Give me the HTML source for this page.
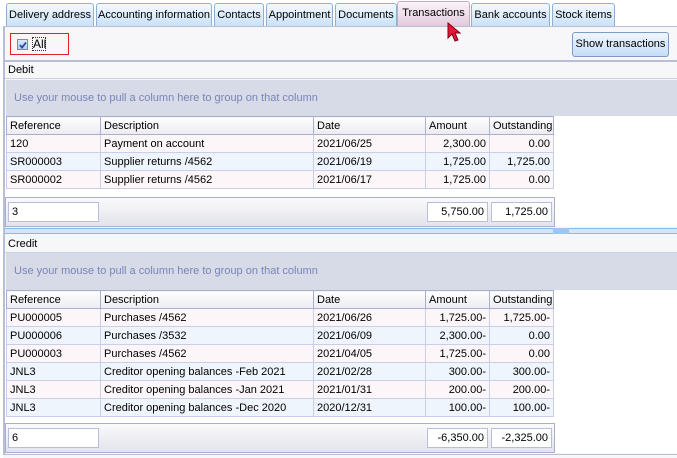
<!DOCTYPE html>
<html><head><meta charset="utf-8"><style>
*{box-sizing:border-box;margin:0;padding:0}
body{width:677px;height:458px;overflow:hidden;background:#fff;font-family:"Liberation Sans",sans-serif;font-size:11px;color:#000;position:relative}
.a{position:absolute}
.tab{position:absolute;top:3px;height:23px;border:1px solid #8fb0d4;border-bottom:none;border-radius:3px 3px 0 0;background:linear-gradient(#f4f9fe,#c9e1f7);text-align:center;line-height:22px;white-space:nowrap}
.tab.sel{top:1px;height:25px;background:linear-gradient(#fbf4f9,#e3cadd);border-color:#c9a9c2}
.grp{position:absolute;left:6px;right:0;background:#d7dbe8;color:#7a84b8;padding-left:8px}
table{border-collapse:collapse;position:absolute;left:6px;table-layout:fixed;width:547px}
td{border:1px solid #c9cfe6;height:18px;padding:0 3px;white-space:nowrap;overflow:hidden}
tr.h td{background:linear-gradient(#fefefe,#ebebf2);border-color:#aab0cc}
tr.p td{background:#fcf6f9}
tr.b td{background:#eef5fc}
.r{text-align:right}
.foot{position:absolute;left:5px;width:550px;height:30px;border:1px solid #aab0cc;background:linear-gradient(#fafafc,#e2e3ec)}
.box{position:absolute;top:4px;height:20px;border:1px solid #b8bed8;background:#fff;line-height:18px;padding:0 3px}
</style></head><body>
<div class="a" style="left:0;top:0;width:677px;height:27px;background:#fff"></div>
<div class="tab" style="left:6px;width:88px">Delivery address</div>
<div class="tab" style="left:96px;width:116px">Accounting information</div>
<div class="tab" style="left:214px;width:50px">Contacts</div>
<div class="tab" style="left:266px;width:67px">Appointment</div>
<div class="tab" style="left:335px;width:62px">Documents</div>
<div class="tab sel" style="left:397px;width:73px">Transactions</div>
<div class="tab" style="left:471px;width:79px">Bank accounts</div>
<div class="tab" style="left:552px;width:63px">Stock items</div>
<!-- panel -->
<div class="a" style="left:3px;top:26px;width:674px;height:432px;border-left:2px solid #b8bed8;border-top:1px solid #b8bed8;background:#f7f7fa"></div>
<div class="a" style="left:10px;top:33px;width:59px;height:22px;border:1px solid #e0202a"></div>
<div class="a" style="left:17px;top:39px;width:11px;height:11px;border:1px solid #6d8fc0;background:linear-gradient(#d8e8f8,#b4cfee)"></div>
<svg class="a" style="left:18px;top:40px" width="10" height="10"><path d="M2 5 L4 7.5 L8 2.5" stroke="#1c4fa0" stroke-width="1.8" fill="none"/></svg>
<div class="a" style="left:32px;top:37px;width:14px;height:14px;border:1px dotted #333;line-height:12px;font-size:12px">All</div>
<div class="a" style="left:572px;top:32px;width:97px;height:25px;border:1px solid #7d9bc6;border-radius:3px;background:linear-gradient(#f0f6fe,#c6def6);text-align:center;line-height:23px">Show transactions</div>
<div class="a" style="left:5px;top:60px;width:672px;height:2px;background:#b8bed8"></div>
<div class="a" style="left:5px;top:62px;width:672px;height:17px;background:#f7f7fa;padding-left:3px;line-height:17px;border-bottom:1px solid #c9cfe6">Debit</div>
<div class="grp" style="top:80px;height:36px;line-height:36px">Use your mouse to pull a column here to group on that column</div>
<div class="a" style="left:5px;top:116px;width:672px;height:110px;background:#fff"></div>
<table style="top:116px">
<colgroup><col style="width:94px"><col style="width:213px"><col style="width:112px"><col style="width:64px"><col style="width:64px"></colgroup>
<tr class="h"><td>Reference</td><td>Description</td><td>Date</td><td>Amount</td><td>Outstanding</td></tr>
<tr class="p"><td>120</td><td>Payment on account</td><td>2021/06/25</td><td class="r">2,300.00</td><td class="r">0.00</td></tr>
<tr class="b"><td>SR000003</td><td>Supplier returns /4562</td><td>2021/06/19</td><td class="r">1,725.00</td><td class="r">1,725.00</td></tr>
<tr class="p"><td>SR000002</td><td>Supplier returns /4562</td><td>2021/06/17</td><td class="r">1,725.00</td><td class="r">0.00</td></tr>
</table>
<div class="foot" style="top:197px">
<div class="box" style="left:2px;width:91px">3</div>
<div class="box r" style="left:421px;width:61px">5,750.00</div>
<div class="box r" style="left:485px;width:61px">1,725.00</div>
</div>
<div class="a" style="left:5px;top:228px;width:672px;height:6px;border-top:1px solid #8cb8e6;border-bottom:1px solid #8cb8e6;background:#d2e6fa"></div>
<div class="a" style="left:553px;top:228px;width:16px;height:6px;background:#9cc6f0"></div>
<div class="a" style="left:5px;top:235px;width:672px;height:18px;background:#f7f7fa;padding-left:3px;line-height:18px;border-bottom:1px solid #c9cfe6">Credit</div>
<div class="grp" style="top:253px;height:37px;line-height:37px">Use your mouse to pull a column here to group on that column</div>
<div class="a" style="left:5px;top:290px;width:672px;height:163px;background:#fff"></div>
<table style="top:290px">
<colgroup><col style="width:94px"><col style="width:213px"><col style="width:112px"><col style="width:64px"><col style="width:64px"></colgroup>
<tr class="h"><td>Reference</td><td>Description</td><td>Date</td><td>Amount</td><td>Outstanding</td></tr>
<tr class="p"><td>PU000005</td><td>Purchases /4562</td><td>2021/06/26</td><td class="r">1,725.00-</td><td class="r">1,725.00-</td></tr>
<tr class="b"><td>PU000006</td><td>Purchases /3532</td><td>2021/06/09</td><td class="r">2,300.00-</td><td class="r">0.00</td></tr>
<tr class="p"><td>PU000003</td><td>Purchases /4562</td><td>2021/04/05</td><td class="r">1,725.00-</td><td class="r">0.00</td></tr>
<tr class="b"><td>JNL3</td><td>Creditor opening balances -Feb 2021</td><td>2021/02/28</td><td class="r">300.00-</td><td class="r">300.00-</td></tr>
<tr class="p"><td>JNL3</td><td>Creditor opening balances -Jan 2021</td><td>2021/01/31</td><td class="r">200.00-</td><td class="r">200.00-</td></tr>
<tr class="b"><td>JNL3</td><td>Creditor opening balances -Dec 2020</td><td>2020/12/31</td><td class="r">100.00-</td><td class="r">100.00-</td></tr>
</table>
<div class="foot" style="top:423px">
<div class="box" style="left:2px;width:91px">6</div>
<div class="box r" style="left:421px;width:61px">-6,350.00</div>
<div class="box r" style="left:485px;width:61px">-2,325.00</div>
</div>
<div class="a" style="left:3px;top:454px;width:674px;height:4px;border-top:1px solid #b8bed8;background:#f7f7fa"></div>
<svg class="a" style="left:447px;top:22px" width="16" height="22" viewBox="0 0 16 22"><path d="M1 1 L1 16 L5 12 L8 19 L11 18 L8 11 L13 11 Z" fill="#e8153a" stroke="#7a0010" stroke-width="1"/></svg>
</body></html>
